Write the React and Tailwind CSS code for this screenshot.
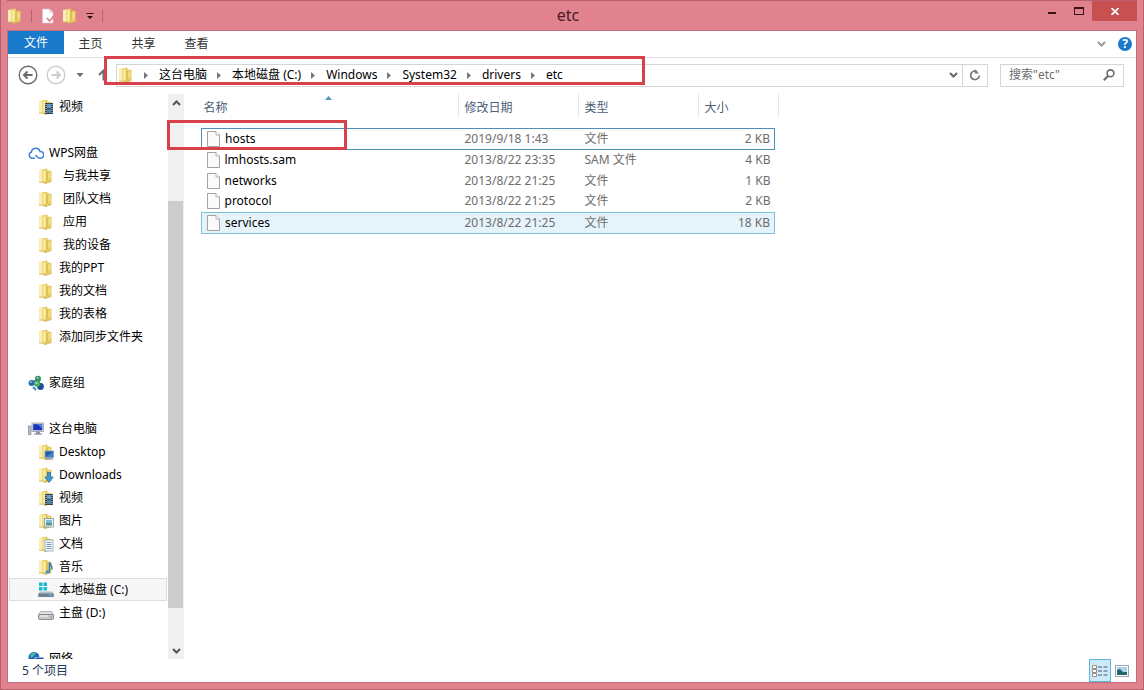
import React from "react";

function FolderBase() {
  return (
    <>
      <path d="M1 2L7 1v13H1z" fill="#f0dc86" />
      <path d="M1 2.500L4.500 1.500V13.500L1 14z" fill="#f9efb4" />
      <path d="M4.500 1.500L9 .5V13.500L7 15.500 4.500 13.500z" fill="#ecd269" />
      <path d="M5.500 3L7.500 2V14L5.500 12.500z" fill="#fbf0ac" />
      <path d="M9 4L10 2.500 13.500 3V13.500L9.500 14.500 7.500 15.200 9 12.500z" fill="#e8cc5e" />
      <path d="M10.500 4.500L12.500 4.500V10L10.500 11z" fill="#f4e08a" />
      <path d="M9 1V12L7 15.500" fill="none" stroke="#c9a93c" strokeWidth="0.700" />
      <path d="M1 14L5 14.300 7 15.500 13.500 13.500" fill="none" stroke="#cdb04c" strokeWidth="0.800" />
    </>
  );
}

function Overlay({ kind }) {
  switch (kind) {
    case "video":
      return (
        <g>
          <rect x="7" y="4" width="8" height="11" fill="#37424d" />
          <rect x="9" y="5" width="4" height="4" fill="#5aa0cf" />
          <rect x="9" y="10" width="4" height="4" fill="#4a83a8" />
          <path d="M8 5v9M14 5v9" stroke="#d7dde2" strokeWidth="1" strokeDasharray="1 1" />
        </g>
      );
    case "desktop":
      return (
        <g>
          <rect x="7" y="7" width="8.5" height="6.5" fill="#1f5cad" stroke="#89a3bd" strokeWidth="0.8" />
          <path d="M7.500 13L15 8V13z" fill="#3f83cc" />
          <path d="M8 15h7" stroke="#5e6f80" />
        </g>
      );
    case "download":
      return <path d="M9.500 5.500h3v4.500h2.800L11 15.500 6.700 10h2.800z" fill="#3d97d8" stroke="#1f6fae" strokeWidth="0.7" />;
    case "picture":
      return (
        <g>
          <rect x="6.500" y="5.500" width="9" height="8.500" fill="#e9f4f8" stroke="#7f97a3" strokeWidth="0.8" />
          <rect x="8" y="7" width="6" height="2.500" fill="#7cbbe0" />
          <rect x="8" y="9.500" width="6" height="3" fill="#559487" />
        </g>
      );
    case "document":
      return (
        <g>
          <rect x="7" y="4" width="8" height="11" fill="#f6f9fc" stroke="#8fa2b4" strokeWidth="0.8" />
          <path d="M8.500 6.500h5M8.500 8.500h5M8.500 10.500h5M8.500 12.500h5" stroke="#6a8fb9" strokeWidth="0.9" />
        </g>
      );
    case "music":
      return (
        <g>
          <path d="M11.500 3.500v9" stroke="#2474ae" strokeWidth="1.500" />
          <path d="M11.500 3.500c.5 3 3.500 3 2.500 7" fill="none" stroke="#2474ae" strokeWidth="1.400" />
          <ellipse cx="9.700" cy="13" rx="2.300" ry="1.800" fill="#3d97d8" />
        </g>
      );
    default:
      return null;
  }
}

function Folder({ kind }) {
  return (
    <svg className="size-4 shrink-0" viewBox="0 0 16 16" aria-hidden="true">
      <FolderBase />
      <Overlay kind={kind} />
    </svg>
  );
}

function CloudIcon() {
  return (
    <svg className="size-4 shrink-0" viewBox="0 0 16 16" fill="none" stroke="#3f7fd6" strokeWidth="1.500" aria-hidden="true">
      <path d="M7 13.200H4.200A3.200 3.200 0 0 1 3.400 7 A4.400 4.400 0 0 1 12 6.400 A3.400 3.400 0 0 1 12.600 13.200 H11.500 C9.500 13.200 8.800 11.500 7.500 10" />
    </svg>
  );
}

function HomeGroupIcon() {
  return (
    <svg className="size-4 shrink-0" viewBox="0 0 16 16" aria-hidden="true">
      <path d="M3 8L10 4L13 12Z" fill="none" stroke="#3d6b8d" strokeWidth="1.500" />
      <circle cx="3.500" cy="8" r="3" fill="#2b69b3" />
      <circle cx="10" cy="3.800" r="3" fill="#2f9262" />
      <circle cx="12.500" cy="11.500" r="3.400" fill="#1f4f97" />
      <circle cx="9" cy="8.800" r="3" fill="#49b05e" />
      <circle cx="2.800" cy="7" r="1" fill="#92c1ea" />
      <circle cx="9.600" cy="3" r="1" fill="#9ddcb5" />
      <circle cx="8.500" cy="8" r="1" fill="#b8eab9" />
      <path d="M5 12l3 3" stroke="#3f89bd" strokeWidth="2" />
    </svg>
  );
}

function ComputerIcon() {
  return (
    <svg className="size-4 shrink-0" viewBox="0 0 16 16" aria-hidden="true">
      <rect x="0.500" y="5" width="2.500" height="8.500" fill="#b9c0c8" stroke="#7e8790" strokeWidth="0.700" />
      <rect x="4" y="2" width="11.500" height="8.500" fill="#d2d7dd" stroke="#8b95a1" strokeWidth="0.700" />
      <rect x="5.200" y="3.200" width="9" height="6" fill="#1a31bd" />
      <path d="M9 3.200h5.200v4z" fill="#587ee8" />
      <path d="M8 10.500h4v2H8zM6 12.500h8v1.300H6z" fill="#8b95a1" />
    </svg>
  );
}

function SystemDriveIcon() {
  return (
    <svg className="size-4 shrink-0" viewBox="0 0 16 16" aria-hidden="true">
      <path d="M1 0.500h3.500v3.500H1zM5.500 0.500H9v3.500H5.500zM1 5h3.500v3.500H1zM5.500 5H9v3.500H5.500z" fill="#17b8d4" />
      <path d="M2 9.500h12l2 2.500v3H0v-3z" fill="#b4bdc5" />
      <rect x="0.500" y="11.500" width="15" height="3.500" rx="0.500" fill="#6d8090" />
      <rect x="11" y="12.500" width="3" height="1.200" fill="#69c4ec" />
    </svg>
  );
}

function DriveIcon() {
  return (
    <svg className="size-4 shrink-0" viewBox="0 0 16 16" aria-hidden="true">
      <path d="M2.500 6.500h11l2 3.500H.5z" fill="#e2e2e2" stroke="#999" strokeWidth="0.700" />
      <rect x="0.500" y="9.500" width="15" height="5" rx="1.200" fill="#c9c9c9" stroke="#777" strokeWidth="0.800" />
      <path d="M2 11h8" stroke="#f7f7f7" />
      <circle cx="13" cy="12" r="0.800" fill="#54a054" />
    </svg>
  );
}

function NetworkIcon() {
  return (
    <svg className="size-4 shrink-0" viewBox="0 0 16 16" aria-hidden="true">
      <circle cx="6" cy="6.500" r="5.500" fill="#1c67b6" />
      <path d="M2 4c2-3 5-3 6-2L6 5 3 7zM6 6l4 1-3 4z" fill="#43b9a0" />
      <rect x="7.500" y="6.500" width="8" height="6" fill="#2446bd" stroke="#a4b5ca" strokeWidth="0.800" />
      <path d="M9 14h5" stroke="#7b8794" />
    </svg>
  );
}

function FileIcon() {
  return (
    <svg className="h-4 w-[13px] shrink-0" viewBox="0 0 13 16" aria-hidden="true">
      <path d="M.5.500H9L12.500 4V15.500H.5z" fill="#fafafa" stroke="#a3a3a3" />
      <path d="M9 .5V4h3.500" fill="#fff" stroke="#a3a3a3" strokeWidth="0.800" />
    </svg>
  );
}

function Chevron({ up, className }) {
  return (
    <svg className={className} viewBox="0 0 9 8" fill="none" stroke="currentColor" strokeWidth="2" aria-hidden="true">
      <path d={up ? "M1 6L4.500 2.500 8 6" : "M1 2L4.500 5.500 8 2"} />
    </svg>
  );
}

const groups = [
  { items: [{ label: "视频", kind: "video" }] },
  {
    label: "WPS网盘",
    icon: CloudIcon,
    items: [
      { label: "与我共享", inset: true },
      { label: "团队文档", inset: true },
      { label: "应用", inset: true },
      { label: "我的设备", inset: true },
      { label: "我的PPT" },
      { label: "我的文档" },
      { label: "我的表格" },
      { label: "添加同步文件夹" },
    ],
  },
  { label: "家庭组", icon: HomeGroupIcon, items: [] },
  {
    label: "这台电脑",
    icon: ComputerIcon,
    items: [
      { label: "Desktop", kind: "desktop" },
      { label: "Downloads", kind: "download" },
      { label: "视频", kind: "video" },
      { label: "图片", kind: "picture" },
      { label: "文档", kind: "document" },
      { label: "音乐", kind: "music" },
      { label: "本地磁盘 (C:)", icon: SystemDriveIcon, selected: true },
      { label: "主盘 (D:)", icon: DriveIcon },
    ],
  },
  { label: "网络", icon: NetworkIcon, items: [] },
];

const files = [
  { name: "hosts", date: "2019/9/18 1:43", type: "文件", size: "2 KB", state: "focused" },
  { name: "lmhosts.sam", date: "2013/8/22 23:35", type: "SAM 文件", size: "4 KB" },
  { name: "networks", date: "2013/8/22 21:25", type: "文件", size: "1 KB" },
  { name: "protocol", date: "2013/8/22 21:25", type: "文件", size: "2 KB" },
  { name: "services", date: "2013/8/22 21:25", type: "文件", size: "18 KB", state: "hover" },
];

const rowStyles = {
  focused: "border border-[#4a90b8]",
  hover: "border border-[#7fc0dc] bg-[#e5f3fb]",
};

const crumbs = ["这台电脑", "本地磁盘 (C:)", "Windows", "System32", "drivers", "etc"];

function TitleBar() {
  return (
    <header className="relative flex h-[30px] shrink-0 items-start justify-between border-t border-[#b9606c]">
      <div className="flex h-full items-center">
        <Folder />
        <span className="ml-2 h-3 w-px bg-[#b5656f]" />
        <button aria-label="属性" className="ml-2">
          <svg className="size-4" viewBox="0 0 16 16" aria-hidden="true">
            <path d="M2.500 1H9.500L13 4.500V15H2.500z" fill="#fff" stroke="#d8c4c6" strokeWidth="0.700" />
            <path d="M9.500 1V4.500H13" fill="none" stroke="#d8c4c6" strokeWidth="0.700" />
            <path d="M7 10l2.500 3L14 8" fill="none" stroke="#dd7f86" strokeWidth="1.800" />
          </svg>
        </button>
        <button aria-label="新建文件夹" className="ml-1.5">
          <Folder />
        </button>
        <button aria-label="自定义快速访问工具栏" className="ml-2">
          <svg className="h-2 w-2" viewBox="0 0 8 8" fill="#2e1417" aria-hidden="true">
            <path d="M.5 1h7v1h-7zM1 4h6L4 7z" />
          </svg>
        </button>
        <span className="ml-2 h-3 w-px bg-[#b5656f]" />
      </div>
      <h1 className="pointer-events-none absolute inset-x-0 top-0.5 pr-2 text-center text-[16px] leading-6 text-[#4a1b23]">etc</h1>
      <div className="flex h-5">
        <button aria-label="最小化" className="flex w-[27px] items-center justify-center">
          <span className="mt-1 h-0.5 w-2 bg-[#3a1218]" />
        </button>
        <button aria-label="最大化" className="flex w-[27px] items-center justify-center">
          <span className="h-2 w-2.5 border border-t-2 border-[#3a1218]" />
        </button>
        <button aria-label="关闭" className="flex w-[45px] items-center justify-center bg-[#c75050]">
          <svg className="h-[7px] w-2" viewBox="0 0 8 7" stroke="#fff" strokeWidth="1.700" aria-hidden="true">
            <path d="M.5 0l7 7M7.500 0l-7 7" />
          </svg>
        </button>
      </div>
    </header>
  );
}

function Ribbon() {
  return (
    <div className="flex h-[27px] shrink-0 items-start border-b border-[#dadfe6]">
      <button className="h-[23px] w-14 bg-[#1979ca] text-white">文件</button>
      <nav className="flex h-[26px] flex-1">
        {["主页", "共享", "查看"].map((tab) => (
          <button key={tab} className="w-[53px] text-[#333]">
            {tab}
          </button>
        ))}
      </nav>
      <div className="flex h-[26px] items-center gap-3 pr-1">
        <button aria-label="展开功能区">
          <Chevron className="h-2 w-[9px] text-[#999]" />
        </button>
        <button
          aria-label="帮助"
          className="flex size-3.5 items-center justify-center rounded-full bg-[#1979ca] text-[12px] leading-none font-bold text-white"
        >
          ?
        </button>
      </div>
    </div>
  );
}

function NavArrow({ label, right, className }) {
  return (
    <button aria-label={label} className={className}>
      <svg className="size-5" viewBox="0 0 20 20" fill="none" stroke="currentColor" aria-hidden="true">
        <circle cx="10" cy="10" r="8.800" strokeWidth="1.400" />
        <path d={right ? "M5.500 10h8.500M10.500 6.500L14 10l-3.500 3.500" : "M14.500 10H6M9.500 6.500L6 10l3.500 3.500"} strokeWidth="2" />
      </svg>
    </button>
  );
}

function AddressRow() {
  return (
    <div className="relative flex h-9 shrink-0 items-center pr-3 pb-0.5 pl-2.5">
      <NavArrow label="后退" className="text-[#6b6b6b]" />
      <NavArrow label="前进" right className="ml-2 text-[#cdcdcd]" />
      <button aria-label="最近位置" className="ml-2.5">
        <svg className="h-1 w-2" viewBox="0 0 8 4" fill="#6b6b6b" aria-hidden="true">
          <path d="M.5 0h7L4 4z" />
        </svg>
      </button>
      <button aria-label="上移" className="ml-3.5 w-1.5 overflow-hidden">
        <svg className="h-3 w-[11px]" viewBox="0 0 11 12" fill="none" stroke="#6b6b6b" strokeWidth="2" aria-hidden="true">
          <path d="M1 6L5.500 1.500 10 6M5.500 2v9.500" />
        </svg>
      </button>
      <div className="ml-3 flex h-[23px] flex-1 items-center border border-[#d5d5d5]">
        <span className="ml-px flex">
          <Folder />
        </span>
        <nav aria-label="地址" className="flex flex-1 items-center">
          {crumbs.map((crumb) => (
            <span key={crumb} className="flex items-center">
              <svg className="h-[7px] w-[25px]" viewBox="0 0 25 7" fill="#777" aria-hidden="true">
                <path d="M10 0l4 3.500L10 7z" />
              </svg>
              <button className="whitespace-nowrap text-black">{crumb}</button>
            </span>
          ))}
        </nav>
        <button aria-label="历史记录" className="flex h-full w-[18px] items-center justify-center">
          <Chevron className="h-2 w-[9px] text-[#666]" />
        </button>
        <button aria-label="刷新" className="flex h-full w-[25px] items-center justify-center border-l border-[#d5d5d5]">
          <svg className="size-3" viewBox="0 0 12 12" fill="none" stroke="#777" strokeWidth="1.700" aria-hidden="true">
            <path d="M8 2.500A4.300 4.300 0 1 0 10.300 6.500" />
            <path d="M5.800 0v4.500h4.200z" fill="#777" stroke="none" />
          </svg>
        </button>
      </div>
      <label className="ml-3 flex h-[23px] w-31 items-center border border-[#d5d5d5] px-2">
        <input
          type="text"
          aria-label="搜索"
          placeholder={'搜索"etc"'}
          className="w-full min-w-0 flex-1 bg-transparent outline-none placeholder:text-[#6d6d6d]"
        />
        <svg className="size-3 shrink-0" viewBox="0 0 12 12" fill="none" stroke="#6b6b6b" strokeWidth="1.600" aria-hidden="true">
          <circle cx="7.500" cy="4.300" r="3.400" />
          <path d="M5 7L.8 11.200" strokeWidth="2" />
        </svg>
      </label>
      <div className="pointer-events-none absolute -top-0.5 left-24 h-[29px] w-[541px] border-3 border-[#d9414a]" />
    </div>
  );
}

function SidebarItem({ item }) {
  const Icon = item.icon;
  return (
    <li>
      <button
        className={
          "flex h-[23px] w-full items-center border pl-7 text-left " +
          (item.selected ? "border-[#dedede] bg-[#f7f7f7]" : "border-transparent")
        }
      >
        {Icon ? <Icon /> : <Folder kind={item.kind} />}
        <span className={item.inset ? "ml-[9px]" : "ml-[5px]"}>{item.label}</span>
      </button>
    </li>
  );
}

function Sidebar() {
  return (
    <aside className="flex w-44 shrink-0">
      <div className="min-w-0 flex-1 overflow-hidden pt-px pr-px pl-px">
        {groups.map((group, index) => {
          const Icon = group.icon;
          return (
            <section key={index} className="mb-[23px]">
              {group.label && (
                <button className="flex h-[23px] w-full items-center gap-[5px] pl-[19px] text-left">
                  <Icon />
                  <span>{group.label}</span>
                </button>
              )}
              <ul>
                {group.items.map((item) => (
                  <SidebarItem key={item.label} item={item} />
                ))}
              </ul>
            </section>
          );
        })}
      </div>
      <div className="flex w-4 flex-col bg-[#f0f0f0]">
        <button aria-label="向上滚动" className="flex h-[18px] shrink-0 items-center justify-center">
          <Chevron up className="h-2 w-[9px] text-[#555]" />
        </button>
        <div className="flex flex-1 flex-col">
          <div className="flex-[89]" />
          <div className="mr-px flex-[405] bg-[#cdcdcd]" />
          <div className="flex-[34]" />
        </div>
        <button aria-label="向下滚动" className="flex h-[17px] shrink-0 items-center justify-center">
          <Chevron className="h-2 w-[9px] text-[#555]" />
        </button>
      </div>
    </aside>
  );
}

function FileTable() {
  const head = "flex h-6 items-center border-r border-[#e3e8ee] pt-1 text-[#4c607a]";
  return (
    <table className="w-[574px] table-fixed border-collapse">
      <colgroup>
        <col className="w-[257px]" />
        <col className="w-30" />
        <col className="w-30" />
        <col />
      </colgroup>
      <thead>
        <tr className="h-[34px] align-top">
          <th className="p-0 font-normal">
            <div className={head + " relative pl-0.5"}>
              名称
              <svg className="absolute top-0.5 left-[123px] h-1 w-[7px]" viewBox="0 0 7 4" fill="#5296b8" aria-hidden="true">
                <path d="M0 4L3.500 0 7 4z" />
              </svg>
            </div>
          </th>
          <th className="p-0 font-normal">
            <div className={head + " pl-1.5"}>修改日期</div>
          </th>
          <th className="p-0 font-normal">
            <div className={head + " pl-1.5"}>类型</div>
          </th>
          <th className="p-0 font-normal">
            <div className={head + " -mr-1 pl-1.5"}>大小</div>
          </th>
        </tr>
      </thead>
      <tbody>
        {files.map((file) => (
          <tr key={file.name} className={"h-[21px] text-[#6d6d6d] " + (rowStyles[file.state] || "")}>
            <td className="p-0 pl-[5px] text-black">
              <div className="flex h-5 items-center gap-[5px]">
                <FileIcon />
                {file.name}
              </div>
            </td>
            <td className="p-0 pl-1.5">{file.date}</td>
            <td className="p-0 pl-1.5">{file.type}</td>
            <td className="p-0 pr-1 text-right">{file.size}</td>
          </tr>
        ))}
      </tbody>
    </table>
  );
}

function StatusBar() {
  return (
    <footer className="flex h-[23px] shrink-0 items-center justify-between pr-1.5 pl-3.5">
      <span className="text-[#1e395b]">5 个项目</span>
      <div className="flex h-full items-center gap-[3px]">
        <button aria-label="详细信息" className="flex h-full w-[22px] items-center justify-center border border-[#5fb5d9] bg-[#cdeaf8]">
          <svg className="h-3 w-4" viewBox="0 0 16 12" fill="none" aria-hidden="true">
            <path d="M.5.500h4v3h-4zM.5 4.500h4v3h-4zM.5 8.500h4v3h-4z" fill="#fff" stroke="#8b7468" strokeWidth="0.800" />
            <path d="M6 2h4M6 6h4M6 10h4M11.500 2h4M11.500 6h4M11.500 10h4" stroke="#45587a" />
          </svg>
        </button>
        <button aria-label="大图标" className="flex size-4 items-center justify-center">
          <svg className="h-3 w-3.5" viewBox="0 0 14 12" aria-hidden="true">
            <rect x="0.500" y="0.500" width="13" height="11" fill="#fff" stroke="#9aa9b5" />
            <rect x="2" y="2" width="10" height="8" fill="#a9d5ec" />
            <path d="M2 5l3-1 3 3 4 0v3H2z" fill="#23656f" />
          </svg>
        </button>
      </div>
    </footer>
  );
}

export default function App() {
  return (
    <div className="flex h-screen flex-col border-x border-b border-[#b9606c] bg-[#e0838f] font-['Noto_Sans','Noto_Sans_CJK_SC',sans-serif] text-[12px] leading-4 text-black">
      <div className="flex min-h-0 flex-1 flex-col px-1.5 pb-1.5">
        <TitleBar />
        <main className="flex min-h-0 flex-1 flex-col border border-[#c0707b] bg-white">
          <Ribbon />
          <AddressRow />
          <div className="relative flex min-h-0 flex-1">
            <Sidebar />
            <div className="min-w-0 flex-1 pl-[17px]">
              <FileTable />
            </div>
            <div className="pointer-events-none absolute top-[26px] left-[159px] h-[30px] w-45 border-3 border-[#d9414a]" />
          </div>
          <StatusBar />
        </main>
      </div>
    </div>
  );
}
